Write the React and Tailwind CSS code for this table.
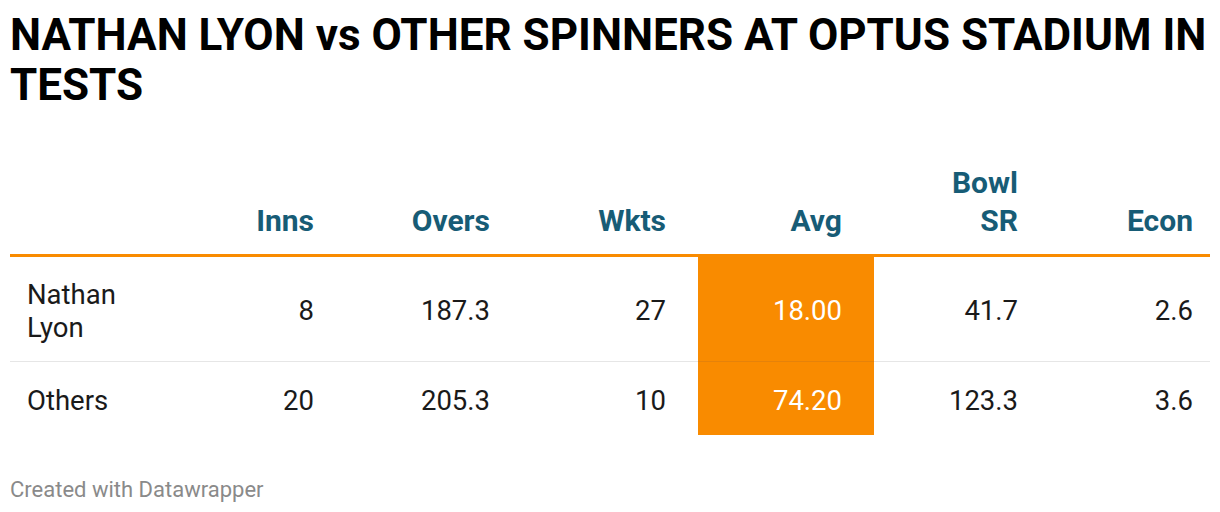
import React from "react";

const rows = [
  { name: ["Nathan", "Lyon"], inns: "8", overs: "187.3", wkts: "27", avg: "18.00", sr: "41.7", econ: "2.6" },
  { name: ["Others"], inns: "20", overs: "205.3", wkts: "10", avg: "74.20", sr: "123.3", econ: "3.6" },
];

const cell = "w-[176px] pr-[32px] text-right";

const App = () => {
  return (
    <div
      className="w-[1220px] h-[512px] bg-white px-[10px] pt-[10px] text-[#1a1a1a]"
      style={{ fontFamily: "Roboto, 'Liberation Sans', sans-serif" }}
    >
      {/* Title */}
      <h1 className="text-[44px] leading-[50px] font-bold text-black">
        NATHAN LYON vs OTHER SPINNERS AT OPTUS STADIUM IN TESTS
      </h1>

      {/* Table */}
      <div className="mt-[54px]">
        {/* Header */}
        <div className="flex items-end text-[30px] leading-[38px] font-bold text-[#175c76] pb-[14px] border-b-[3px] border-[#f98b00]">
          <div className="w-[160px]"></div>
          <div className={cell}>Inns</div>
          <div className={cell}>Overs</div>
          <div className={cell}>Wkts</div>
          <div className={cell}>Avg</div>
          <div className={cell}>
            Bowl
            <br />
            SR
          </div>
          <div className="w-[160px] pr-[17px] text-right">Econ</div>
        </div>

        {/* Rows */}
        {rows.map((r, i) => {
          const line = i === 0 ? "border-b border-[#e6e6e6]" : "";
          const pad = i === 0 ? "pt-[21px] pb-[17px]" : "pt-[22px] pb-[18px]";
          const num = `${cell} flex items-center justify-end pt-[3px] ${line}`;
          return (
            <div key={i} className="flex text-[27.5px] leading-[33px]">
              <div className={`w-[160px] pl-[17px] ${pad} ${line}`}>
                {r.name.map((n, j) => (
                  <div key={j}>{n}</div>
                ))}
              </div>
              <div className={num}>{r.inns}</div>
              <div className={num}>{r.overs}</div>
              <div className={num}>{r.wkts}</div>
              <div
                className={`${cell} flex items-center justify-end pt-[3px] bg-[#f98b00] text-white ${
                  i === 0 ? "border-b border-[#e5820a]" : ""
                }`}
              >
                {r.avg}
              </div>
              <div className={num}>{r.sr}</div>
              <div className={`w-[160px] pr-[17px] flex items-center justify-end pt-[3px] ${line}`}>
                {r.econ}
              </div>
            </div>
          );
        })}
      </div>

      {/* Footer */}
      <div className="mt-[38px] text-[22px] leading-[33px] text-[#8a8a8a]">
        Created with Datawrapper
      </div>
    </div>
  );
};

export default App;
